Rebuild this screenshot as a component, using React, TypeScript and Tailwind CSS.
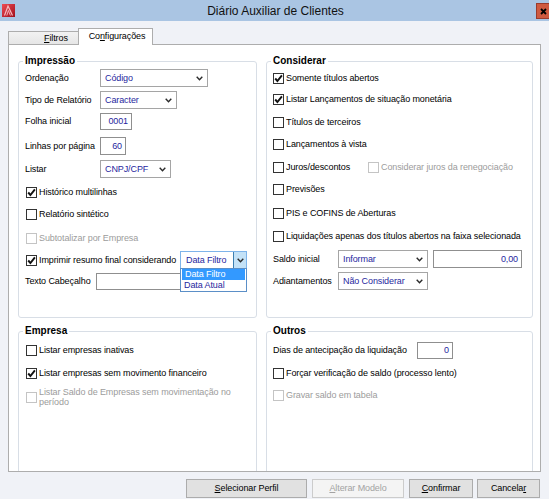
import type { ReactNode } from "react";

const VALUE = "text-[#1f1f9e]";

function Chevron() {
  return (
    <svg width="7" height="5" viewBox="0 0 7 5" className="shrink-0">
      <path d="M0.7 0.8 L3.5 3.8 L6.3 0.8" fill="none" stroke="#2b2b2b" strokeWidth="1.4" />
    </svg>
  );
}

function Check({ on = false, off = false }: { on?: boolean; off?: boolean }) {
  return (
    <span
      className={`flex h-[11px] w-[11px] shrink-0 items-center justify-center border bg-white ${
        off ? "border-[#c4c4c4]" : "border-[#333333]"
      }`}
    >
      {on && (
        <svg width="9" height="9" viewBox="0 0 9 9">
          <path d="M1.2 4.5 L3.4 7 L7.9 1.3" fill="none" stroke="#111" strokeWidth="1.9" />
        </svg>
      )}
    </span>
  );
}

function Combo({ value, className = "" }: { value: string; className?: string }) {
  return (
    <div
      className={`flex h-[18px] shrink-0 items-center justify-between border border-[#a5a5a5] bg-white pl-[4px] pr-[4px] ${className}`}
    >
      <span className={VALUE}>{value}</span>
      <Chevron />
    </div>
  );
}

function Field({ value = "", className = "" }: { value?: string; className?: string }) {
  return (
    <div
      className={`flex shrink-0 items-center justify-end border border-[#8f8f8f] bg-white pr-[3px] ${VALUE} ${className}`}
    >
      {value}
    </div>
  );
}

function Row({ className = "", children }: { className?: string; children: ReactNode }) {
  return <div className={`flex h-[18px] items-center ${className}`}>{children}</div>;
}

function CheckRow({
  label,
  on = false,
  off = false,
  className = "",
}: {
  label: string;
  on?: boolean;
  off?: boolean;
  className?: string;
}) {
  return (
    <Row className={className}>
      <Check on={on} off={off} />
      <span className={`ml-[2px] whitespace-nowrap ${off ? "text-[#9c9c9c]" : ""}`}>{label}</span>
    </Row>
  );
}

function Group({ title, className = "", children }: { title: string; className?: string; children: ReactNode }) {
  return (
    <fieldset className={`min-w-0 rounded-[3px] border border-[#d8dee6] pl-[4px] ${className}`}>
      <legend className="px-[2px] text-[10px] font-bold leading-[12px] tracking-normal">{title}</legend>
      {children}
    </fieldset>
  );
}

function Btn({ children, className = "", off = false }: { children: ReactNode; className?: string; off?: boolean }) {
  return (
    <button
      type="button"
      className={`flex h-[19px] items-center justify-center border ${
        off ? "border-[#cccccc] bg-[#f4f4f4] text-[#a3a3a3]" : "border-[#acacac] bg-[#e1e1e1]"
      } ${className}`}
    >
      {children}
    </button>
  );
}

function AppIcon() {
  return (
    <svg width="13" height="13" viewBox="0 0 13 13">
      <defs>
        <linearGradient id="ic" x1="0" y1="0" x2="1" y2="1">
          <stop offset="0" stopColor="#ee4b55" />
          <stop offset="1" stopColor="#a0101c" />
        </linearGradient>
      </defs>
      <rect width="13" height="13" fill="url(#ic)" />
      <path d="M2.5 11.5 L6 2 L10.5 11.5" fill="none" stroke="#f8b9bf" strokeWidth="1.2" />
      <path d="M4.8 11.5 L6.4 6.5 L8.4 11.5" fill="none" stroke="#f8b9bf" strokeWidth="0.9" />
    </svg>
  );
}

export default function App() {
  return (
    <div className="flex h-[499px] w-[549px] flex-col overflow-hidden bg-[#f0f2f7] font-['Liberation_Sans',Arial,sans-serif] text-[9px] leading-[11px] tracking-[-0.1px] text-black">
      {/* Title bar */}
      <div className="flex h-[21px] shrink-0 items-center bg-[#aac5e3]">
        <div className="ml-[2px]">
          <AppIcon />
        </div>
        <div className="flex-1 text-center text-[12px] leading-[14px] tracking-normal text-[#111]">
          Diário Auxiliar de Clientes
        </div>
        <div className="mt-[3px] flex h-[16px] w-[13px] items-center justify-center self-start border border-r-0 border-[#9b3b2c] bg-[#cf5a40]">
          <svg width="7" height="7" viewBox="0 0 7 7">
            <path d="M1 1 L6 6 M6 1 L1 6" stroke="#000" strokeWidth="1.8" />
          </svg>
        </div>
      </div>

      <div className="flex flex-1 flex-col px-[8px] pt-[7px]">
        {/* Tabs */}
        <div className="flex h-[16px] items-end">
          <div className="flex h-[13px] w-[71px] items-center border border-b-0 border-[#adadad] bg-gradient-to-b from-[#f2f2f2] to-[#e6e6e6] pl-[35px]">
            <span>
              <span className="underline">F</span>iltros
            </span>
          </div>
          <div className="relative z-10 -mb-px -ml-px flex h-[17px] w-[75px] items-center justify-center border border-b-0 border-[#adadad] bg-white pb-[2px] pl-[3px]">
            <span>
              Co<span className="underline">n</span>figurações
            </span>
          </div>
        </div>

        {/* Panel */}
        <div className="h-[428px] overflow-hidden border border-[#adadad] bg-white pl-[9px] pt-[10px]">
          <div className="grid grid-cols-[239px_267px] gap-x-[9px] gap-y-[7px]">
            <Group title="Impressão" className="h-[263px]">
              <div className="pl-[2px]">
                <Row className="mt-[2px]">
                  <span className="w-[75px]">Ordenação</span>
                  <Combo value="Código" className="w-[108px]" />
                </Row>
                <Row className="mt-[4px]">
                  <span className="w-[75px]">Tipo de Relatório</span>
                  <Combo value="Caracter" className="w-[77px]" />
                </Row>
                <Row className="mt-[3px]">
                  <span className="w-[75px]">Folha inicial</span>
                  <Field value="0001" className="h-[17px] w-[32px]" />
                </Row>
                <Row className="mt-[7px]">
                  <span className="w-[75px]">Linhas por página</span>
                  <Field value="60" className="h-[18px] w-[26px]" />
                </Row>
                <Row className="mt-[5px]">
                  <span className="w-[75px]">Listar</span>
                  <Combo value="CNPJ/CPF" className="w-[71px]" />
                </Row>
                <div className="pl-[1px]">
                  <CheckRow on label="Histórico multilinhas" className="mt-[5px]" />
                  <CheckRow label="Relatório sintético" className="mt-[4px]" />
                  <CheckRow off label="Subtotalizar por Empresa" className="mt-[6px]" />
                  <Row className="mt-[4px]">
                    <div className="flex w-[154px] items-center">
                      <Check on />
                      <span className="ml-[2px] whitespace-nowrap">Imprimir resumo final considerando</span>
                    </div>
                    <div className="relative z-10 flex h-[18px] w-[67px] items-center justify-between border border-[#7eb4ea] bg-white pl-[5px]">
                      <span className={VALUE}>Data Filtro</span>
                      <div className="flex h-full w-[13px] items-center justify-center border-l border-[#3c7fb1] bg-[#c4e2f7]">
                        <Chevron />
                      </div>
                      <div className="absolute left-[-1px] top-[16px] w-[67px] border border-[#5b8fc7] bg-white">
                        <div className="mx-px bg-[#3399ff] pl-[3px] leading-[11px] text-white">Data Filtro</div>
                        <div className={`pl-[3px] leading-[11px] ${VALUE}`}>Data Atual</div>
                      </div>
                    </div>
                  </Row>
                </div>
                <Row className="mt-[3px]">
                  <span className="w-[71px]">Texto Cabeçalho</span>
                  <Field className="h-[17px] w-[151px]" />
                </Row>
              </div>
            </Group>

            <Group title="Considerar" className="h-[263px]">
              <div className="pl-[2px]">
                <CheckRow on label="Somente títulos abertos" className="mt-[2px]" />
                <CheckRow on label="Listar Lançamentos de situação monetária" className="mt-[3px]" />
                <CheckRow label="Títulos de terceiros" className="mt-[5px]" />
                <CheckRow label="Lançamentos à vista" className="mt-[4px]" />
                <Row className="mt-[5px]">
                  <div className="flex w-[95px] items-center">
                    <Check />
                    <span className="ml-[2px]">Juros/descontos</span>
                  </div>
                  <Check off />
                  <span className="ml-[2px] text-[#9c9c9c]">Considerar juros da renegociação</span>
                </Row>
                <CheckRow label="Previsões" className="mt-[4px]" />
                <CheckRow label="PIS e COFINS de Aberturas" className="mt-[6px]" />
                <CheckRow label="Liquidações apenas dos títulos abertos na faixa selecionada" className="mt-[5px]" />
                <Row className="mt-[5px]">
                  <span className="w-[65px]">Saldo inicial</span>
                  <Combo value="Informar" className="w-[90px]" />
                  <Field value="0,00" className="ml-[5px] h-[18px] w-[89px]" />
                </Row>
                <Row className="mt-[4px]">
                  <span className="w-[65px]">Adiantamentos</span>
                  <Combo value="Não Considerar" className="w-[90px]" />
                </Row>
              </div>
            </Group>

            <Group title="Empresa" className="h-[170px]">
              <div className="pl-[3px]">
                <CheckRow label="Listar empresas inativas" className="mt-[4px]" />
                <CheckRow on label="Listar empresas sem movimento financeiro" className="mt-[5px]" />
                <div className="mt-[5px] flex items-start">
                  <div className="mt-[5px]">
                    <Check off />
                  </div>
                  <span className="ml-[2px] leading-[10px] text-[#9c9c9c]">
                    Listar Saldo de Empresas sem movimentação no
                    <br />
                    período
                  </span>
                </div>
              </div>
            </Group>

            <Group title="Outros" className="h-[170px]">
              <div className="pl-[2px]">
                <Row className="mt-[4px]">
                  <span className="w-[144px]">Dias de antecipação da liquidação</span>
                  <Field value="0" className="h-[17px] w-[36px]" />
                </Row>
                <CheckRow label="Forçar verificação de saldo (processo lento)" className="mt-[5px]" />
                <CheckRow off label="Gravar saldo em tabela" className="mt-[4px]" />
              </div>
            </Group>
          </div>
        </div>

        {/* Buttons */}
        <div className="mt-[7px] flex justify-end gap-[5px] pr-px">
          <Btn className="w-[121px]">
            <span>
              <span className="underline">S</span>elecionar Perfil
            </span>
          </Btn>
          <Btn off className="w-[92px]">
            <span>
              <span className="underline">A</span>lterar Modelo
            </span>
          </Btn>
          <Btn className="w-[64px]">
            <span>
              <span className="underline">C</span>onfirmar
            </span>
          </Btn>
          <Btn className="-ml-px w-[63px]">
            <span>
              Cancela<span className="underline">r</span>
            </span>
          </Btn>
        </div>
      </div>
    </div>
  );
}
